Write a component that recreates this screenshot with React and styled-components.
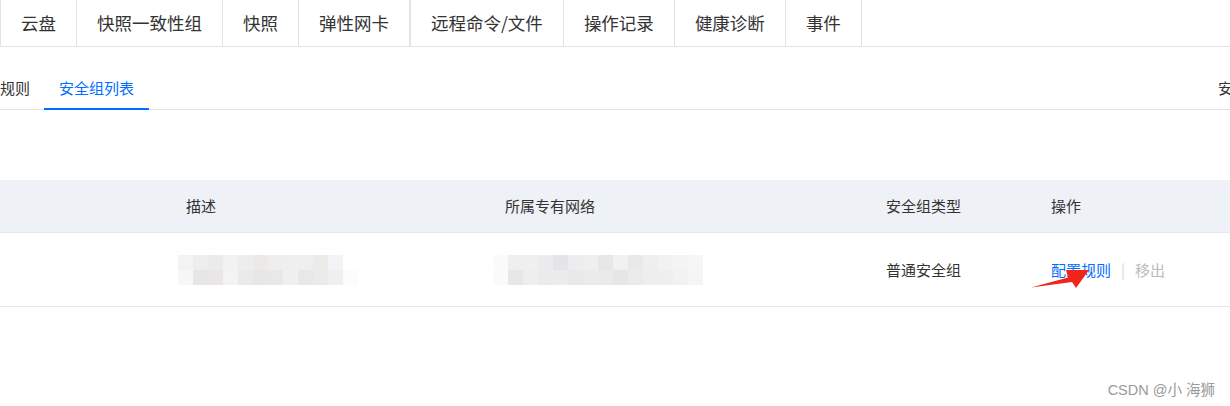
import React from "react";
import styled, { createGlobalStyle } from "styled-components";

const GlobalStyle = createGlobalStyle`
  html, body {
    margin: 0;
    padding: 0;
    background: #fff;
    overflow: hidden;
  }
  body {
    font-family: "Noto Sans CJK SC", "Noto Sans", sans-serif;
    color: #333;
  }
`;

const topTabs = [
  { label: "云盘" },
  { label: "快照一致性组" },
  { label: "快照" },
  { label: "弹性网卡" },
  { label: "远程命令/文件", split: true },
  { label: "操作记录" },
  { label: "健康诊断" },
  { label: "事件" },
];

const mosaicA = [
  ["#f3f3f3", "#eeeeee", "#ebebeb", "#f1f2f1", "#ededed", "#ebeae9", "#eeeeee", "#efefef", "#efefef", "#ebebea", "#f2f3f4"],
  ["#f7f7f6", "#e6e6e7", "#e8e7e6", "#f2f3f2", "#eaeaea", "#e8e7e5", "#e8e8e9", "#f0f0f0", "#e8e8e8", "#ebebea", "#eff0ef", "#fcfcfc"],
];

const mosaicB = [
  ["#fbfbfb", "#efefef", "#f0f0f0", "#ececed", "#e4e5e8", "#ededee", "#efefef", "#e9e7e6", "#f1f1f1", "#ebe9e7", "#efefef", "#f2f2f2", "#f4f4f4", "#f6f6f6"],
  ["#fafafa", "#e6e7e7", "#eeeeee", "#ebebeb", "#ececec", "#e9e9ea", "#ebebeb", "#eaeaea", "#e6e6e7", "#ebebeb", "#eeeeee", "#efefef", "#f2f2f2", "#f5f5f5"],
];

export default function App() {
  return (
    <Page>
      <GlobalStyle />
      <TopBar>
        {topTabs.map((t, i) => (
          <TopTab key={t.label} $first={i === 0} $split={t.split}>
            {t.label}
          </TopTab>
        ))}
      </TopBar>

      <SubBar>
        <SubTab $first>规则</SubTab>
        <SubTab $active>安全组列表</SubTab>
        <SubExtra>安全组规则说明</SubExtra>
      </SubBar>

      <Table>
        <HeadRow>
          <Cell />
          <Cell>描述</Cell>
          <Cell>所属专有网络</Cell>
          <Cell>安全组类型</Cell>
          <Cell>操作</Cell>
        </HeadRow>
        <BodyRow>
          <Cell />
          <Cell>
            <Mosaic $shift={-8}>
              {mosaicA.map((row, r) => (
                <MosaicRow key={r}>
                  {row.map((c, k) => (
                    <Block key={k} $c={c} />
                  ))}
                </MosaicRow>
              ))}
            </Mosaic>
          </Cell>
          <Cell>
            <Mosaic $shift={-12}>
              {mosaicB.map((row, r) => (
                <MosaicRow key={r}>
                  {row.map((c, k) => (
                    <Block key={k} $c={c} $round={k === 0} />
                  ))}
                </MosaicRow>
              ))}
            </Mosaic>
          </Cell>
          <Cell>普通安全组</Cell>
          <Cell>
            <Actions>
              <Link>配置规则</Link>
              <Sep>|</Sep>
              <Disabled>移出</Disabled>
              <Arrow viewBox="0 0 64 28" width="64" height="28">
                <polygon
                  points="2,23.5 39,13.5 37,6 60,6 47,24 43,18"
                  fill="#f0251b"
                />
              </Arrow>
            </Actions>
          </Cell>
        </BodyRow>
      </Table>

      <Watermark>CSDN @小 海狮</Watermark>
    </Page>
  );
}

const Page = styled.div`
  position: relative;
  width: 1230px;
  height: 406px;
  overflow: hidden;
`;

const TopBar = styled.div`
  display: flex;
  height: 46px;
  border-bottom: 1px solid #e3e3e3;
`;

const TopTab = styled.div`
  display: flex;
  align-items: center;
  padding: 0 20px;
  font-size: 17.5px;
  line-height: 24px;
  color: #333;
  border-right: 1px solid #e3e3e3;
  border-left: ${(p) => (p.$first || p.$split ? "1px solid #e3e3e3" : "none")};
  white-space: nowrap;
`;

const SubBar = styled.div`
  display: flex;
  margin-top: 19px;
  height: 43px;
  border-bottom: 1px solid #e2e2e2;
`;

const SubTab = styled.div`
  display: flex;
  align-items: center;
  height: 42px;
  padding: ${(p) => (p.$first ? "0 14px 0 0" : "0 15px")};
  font-size: 15px;
  color: ${(p) => (p.$active ? "#006eff" : "#333")};
  border-bottom: 2px solid ${(p) => (p.$active ? "#006eff" : "transparent")};
  white-space: nowrap;
`;

const SubExtra = styled.div`
  display: flex;
  align-items: center;
  flex-shrink: 0;
  margin-left: auto;
  margin-right: -88px;
  width: 100px;
  font-size: 15px;
  color: #333;
  white-space: nowrap;
`;

const Table = styled.div`
  margin-top: 70px;
  font-size: 15px;
`;

const Row = styled.div`
  display: grid;
  grid-template-columns: 186px 319px 381px 165px 1fr;
  align-items: center;
  border-bottom: 1px solid #e4e6ea;
`;

const HeadRow = styled(Row)`
  height: 52px;
  background: #eef1f6;
  color: #333;
`;

const BodyRow = styled(Row)`
  height: 73px;
`;

const Cell = styled.div`
  white-space: nowrap;
  line-height: 20px;
`;

const Mosaic = styled.div`
  display: flex;
  flex-direction: column;
  margin-left: ${(p) => p.$shift}px;
`;

const MosaicRow = styled.div`
  display: flex;
`;

const Block = styled.div`
  width: 15px;
  height: 15px;
  background: ${(p) => p.$c};
  border-radius: ${(p) => (p.$round ? "4px 0 0 4px" : "0")};
`;

const Actions = styled.div`
  position: relative;
  display: flex;
  align-items: center;
`;

const Link = styled.span`
  color: #006eff;
`;

const Sep = styled.span`
  margin: 0 10px;
  color: #d9d9d9;
`;

const Disabled = styled.span`
  color: #bbb;
`;

const Arrow = styled.svg`
  position: absolute;
  left: -22px;
  top: 4px;
`;

const Watermark = styled.div`
  position: absolute;
  right: 15px;
  bottom: 7px;
  font-family: "Liberation Sans", "Noto Sans CJK SC", sans-serif;
  font-size: 14.5px;
  color: #9a9a9a;
`;
